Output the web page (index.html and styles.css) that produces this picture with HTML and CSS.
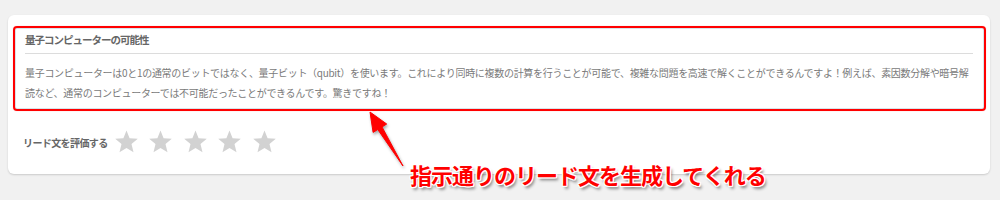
FILE: index.html
```html
<!DOCTYPE html>
<html lang="ja">
<head>
<meta charset="utf-8">
<title>リード文</title>
<link rel="stylesheet" href="styles.css">
</head>
<body>
<div class="page">
  <div class="card">
    <div class="output">
      <div class="output-inner">
        <div class="title">量子コンピューターの可能性</div>
        <div class="divider"></div>
        <p class="body-text">量子コンピューターは0と1の通常のビットではなく、量子ビット（qubit）を使います。これにより同時に複数の計算を行うことが可能で、複雑な問題を高速で解くことができるんですよ！例えば、素因数分解や暗号解読など、通常のコンピューターでは不可能だったことができるんです。驚きですね！</p>
      </div>
    </div>
    <div class="rating">
      <span class="rating-label">リード文を評価する</span>
      <div class="stars">
        <svg class="star" viewBox="0 0 24 24"><polygon points="12,0.6 15.1,8.2 23.3,8.8 17,14.1 19,22.3 12,17.9 5,22.3 7,14.1 0.7,8.8 8.9,8.2"/></svg>
        <svg class="star" viewBox="0 0 24 24"><polygon points="12,0.6 15.1,8.2 23.3,8.8 17,14.1 19,22.3 12,17.9 5,22.3 7,14.1 0.7,8.8 8.9,8.2"/></svg>
        <svg class="star" viewBox="0 0 24 24"><polygon points="12,0.6 15.1,8.2 23.3,8.8 17,14.1 19,22.3 12,17.9 5,22.3 7,14.1 0.7,8.8 8.9,8.2"/></svg>
        <svg class="star" viewBox="0 0 24 24"><polygon points="12,0.6 15.1,8.2 23.3,8.8 17,14.1 19,22.3 12,17.9 5,22.3 7,14.1 0.7,8.8 8.9,8.2"/></svg>
        <svg class="star" viewBox="0 0 24 24"><polygon points="12,0.6 15.1,8.2 23.3,8.8 17,14.1 19,22.3 12,17.9 5,22.3 7,14.1 0.7,8.8 8.9,8.2"/></svg>
      </div>
    </div>
  </div>
  <svg class="arrow" viewBox="0 0 1000 200" width="1000" height="200">
    <polygon points="370,112 386.7,124 382,126.9 403,166 377.8,129.5 373.1,132.4"/>
  </svg>
  <div class="annotation">指示通りのリード文を生成してくれる</div>
</div>
</body>
</html>
```

FILE: styles.css
```css
html, body {
  margin: 0;
  padding: 0;
}
body {
  background: #f1f1f1;
  font-family: "Noto Sans CJK JP", "Noto Sans", sans-serif;
  width: 1000px;
  height: 200px;
  overflow: hidden;
}
.page {
  position: relative;
  width: 1000px;
  height: 200px;
  padding: 15px 10px 0 8px;
  box-sizing: border-box;
}
.card {
  width: 982px;
  height: 159px;
  box-sizing: border-box;
  background: #fff;
  border-radius: 6px;
  box-shadow: 0 1px 2px rgba(0, 0, 0, 0.16);
  padding: 11px 4px 0 5px;
}
.output {
  height: 85px;
  box-sizing: border-box;
  border: 2px solid #ff0000;
  border-radius: 4px;
  box-shadow: inset 0 0 0 1px #d6e4ea, 0 0 1px rgba(255, 0, 0, 0.4);
}
.output-inner {
  padding: 5px 11px 0 10px;
}
.title {
  font-size: 10.5px;
  font-weight: 700;
  color: #666;
  line-height: 14px;
  letter-spacing: -1px;
}
.divider {
  height: 1px;
  background: #dcdcdc;
  margin-top: 6px;
}
.body-text {
  margin: 9px 0 0 0;
  font-size: 10px;
  line-height: 19.5px;
  color: #7a7a7a;
  letter-spacing: -0.3px;
}
.rating {
  display: flex;
  align-items: center;
  margin-top: 19px;
  padding-left: 10px;
  height: 24px;
}
.rating-label {
  font-size: 10px;
  font-weight: 700;
  color: #666;
  letter-spacing: -0.6px;
  margin-right: 6px;
}
.stars {
  display: flex;
  gap: 9.5px;
}
.star {
  width: 25px;
  height: 24px;
  display: block;
}
.star polygon {
  fill: #d2d2d2;
}
.arrow {
  position: absolute;
  left: 0;
  top: 0;
  filter: drop-shadow(1px 2px 1.5px rgba(0, 0, 0, 0.35));
}
.arrow polygon {
  fill: #ff0000;
  stroke: #ff0000;
  stroke-width: 1;
  stroke-linejoin: round;
}
.annotation {
  position: absolute;
  left: 410px;
  top: 159px;
  font-size: 22px;
  font-weight: 700;
  line-height: 30px;
  color: #ff0000;
  letter-spacing: -1px;
  white-space: nowrap;
  text-shadow:
    -1px -1px 0 #fff, 1px -1px 0 #fff, -1px 1px 0 #fff, 1px 1px 0 #fff,
    0 -1px 0 #fff, 0 1px 0 #fff, -1px 0 0 #fff, 1px 0 0 #fff,
    2px 3px 3px rgba(0, 0, 0, 0.45);
}
```
